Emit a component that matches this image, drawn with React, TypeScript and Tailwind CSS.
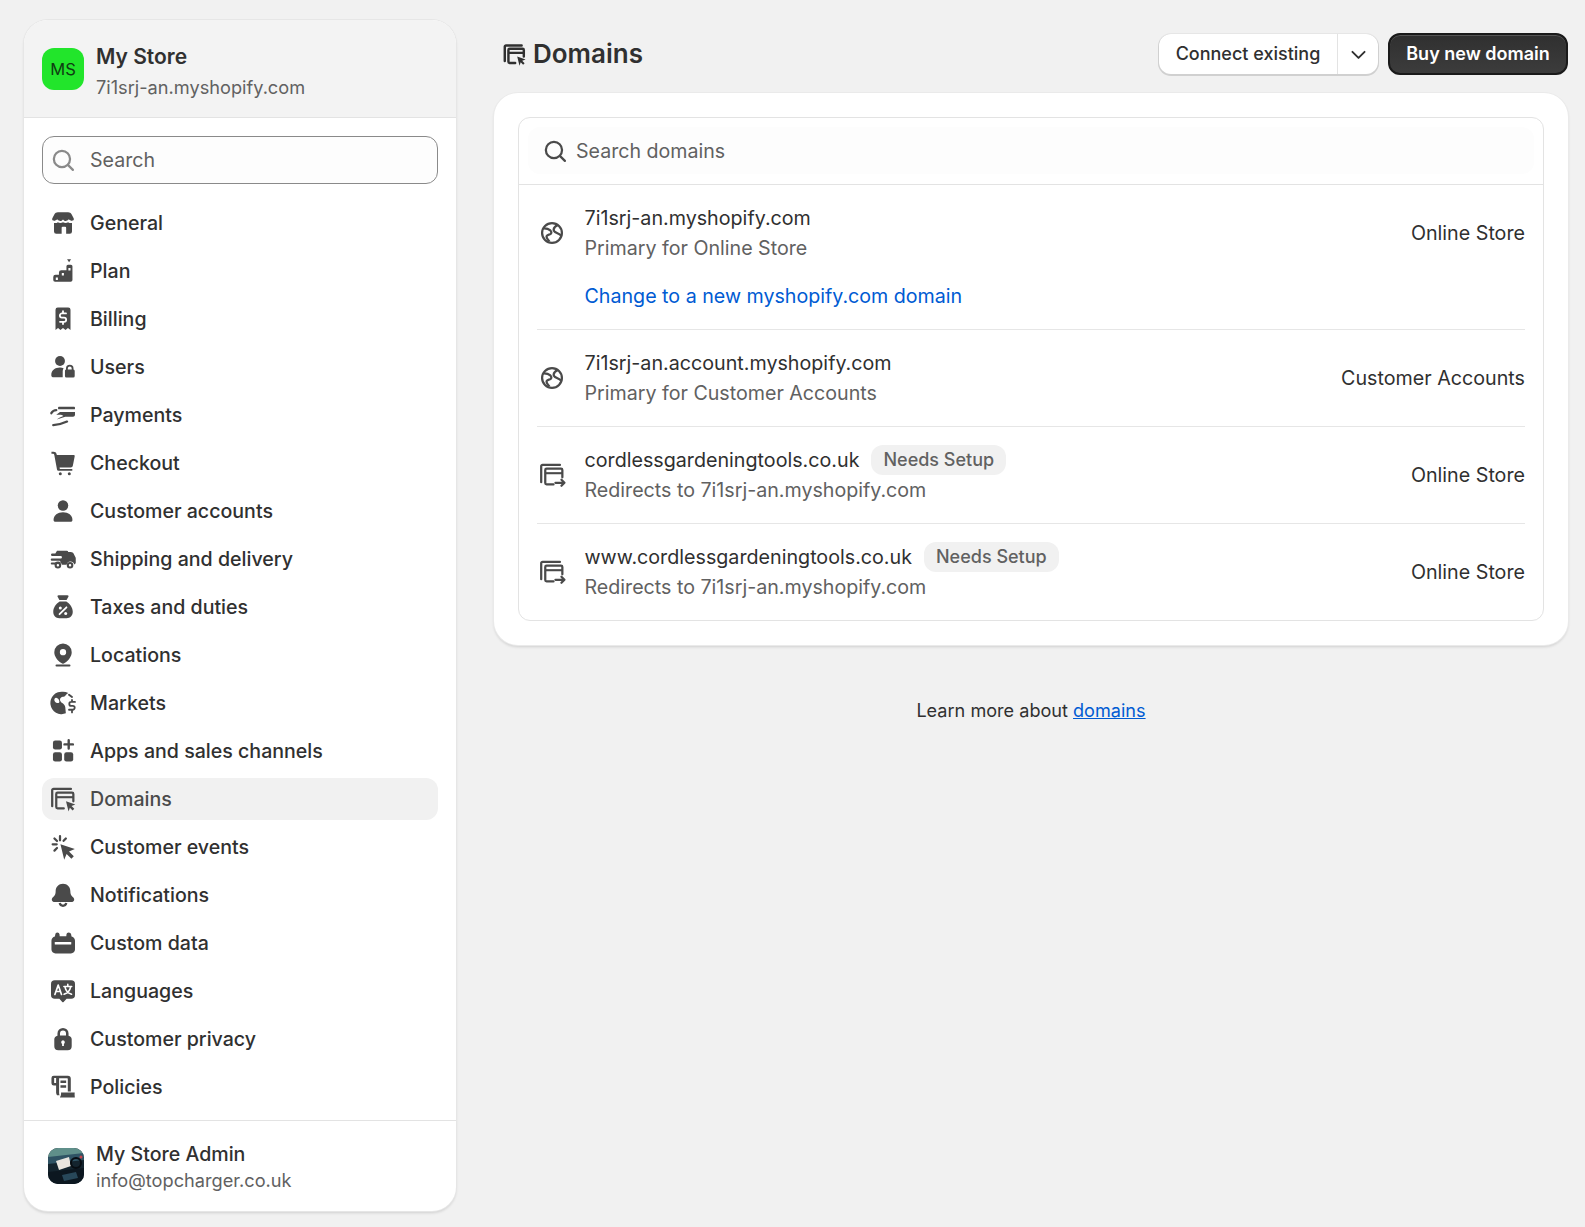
import React from "react";

const C = "#4a4a4a";
const Ic = ({ children }: { children: React.ReactNode }) => (
  <svg viewBox="0 0 20 20" fill={C} className="w-[30px] h-[30px] shrink-0">
    {children}
  </svg>
);

const store = (
  <Ic>
    <path d="M6.6 2.900h6.800c1 0 1.900.5 2.400 1.400l1.300 2.600c.3.700.1 1.300-.5 1.500-.9.300-1.900-.1-2.700-.9-.7.700-1.500 1.100-2.200 1.100s-1.300-.4-1.700-1c-.4.600-1 1-1.700 1s-1.500-.4-2.200-1.100c-.8.800-1.800 1.200-2.700.9-.6-.2-.8-.8-.5-1.500L4.200 4.300c.5-.9 1.400-1.400 2.400-1.400z" />
    <path fillRule="evenodd" d="M4 10c1 .2 1.900 0 2.600-.5.9.7 2.300.7 3.400 0 1.100.7 2.500.7 3.400 0 .7.500 1.600.7 2.600.500v5.700a1.500 1.500 0 0 1-1.500 1.500h-9A1.500 1.500 0 0 1 4 15.700zm5.800 2.500a.7.7 0 0 0-.7.7v4h3v-4a.7.7 0 0 0-.7-.7z" />
  </Ic>
);
const plan = (
  <Ic>
    <path fillRule="evenodd" d="M12.300 6.800a1 1 0 0 1 1-1h2a1 1 0 0 1 1 1V16a1.200 1.200 0 0 1-1.200 1.200H4.700A1.200 1.200 0 0 1 3.500 16v-2a1.500 1.500 0 0 1 1.500-1.500h2.300V11A1.500 1.500 0 0 1 8.800 9.500h3.500zM13.600 8v1.700h1.400V8zM9.200 11.300v1.700h1.400v-1.700zM5.200 14.300V16h1.400v-1.700z" />
    <path d="M12.700 2.200h2.700l-1.350 1.900z" />
  </Ic>
);
const billing = (
  <Ic>
    <path d="M6.500 2.300h7a1.500 1.500 0 0 1 1.500 1.500v13.500l-1.700-1.300-1.600 1.400-1.700-1.400-1.700 1.400-1.600-1.400L5 17.300V3.800a1.500 1.500 0 0 1 1.500-1.500z" />
    <path d="M12 6.300H9.300a1.400 1.400 0 0 0 0 2.800h1.400a1.400 1.400 0 0 1 0 2.800H8M10 4.800v1.500M10 11.900v1.500" fill="none" stroke="#fff" strokeWidth="1.200" strokeLinecap="round" />
  </Ic>
);
const users = (
  <Ic>
    <circle cx="8" cy="6" r="3.300" />
    <path d="M2.200 15.400c0-3.200 2.600-5 5.800-5 .9 0 1.700.1 2.400.4a3.600 3.600 0 0 0-.6 2v4H3.200c-.6 0-1-.5-1-1.400z" />
    <path fillRule="evenodd" d="M11.300 12.700a1 1 0 0 1 .7-1V11a2.500 2.500 0 0 1 5 0v.7a1 1 0 0 1 .8 1V16a1 1 0 0 1-1 1h-4.500a1 1 0 0 1-1-1zm1.900-1h2.600V11a1.300 1.300 0 0 0-2.600 0z" />
  </Ic>
);
const payments = (
  <Ic>
    <rect x="6.700" y="4.500" width="11.300" height="1.700" rx=".6" />
    <path d="M8 8h10v1.800c0 .8-.6 1.300-1.300 1.300h-5.200L5.800 13c1.300-1.100 2.800-1.900 4.500-2.400-.6-.4-1.400-.7-2.800-.7H5.500z" />
    <path d="M2.200 8.800C3 7.500 4 6.800 5.500 6.800" fill="none" stroke={C} strokeWidth="1.500" strokeLinecap="round" />
    <path d="M3.500 16.800c3.200-.2 6.200-1 9.200-2.400" fill="none" stroke={C} strokeWidth="1.500" strokeLinecap="round" />
  </Ic>
);
const cart = (
  <Ic>
    <path d="M2.300 2.500h1.400c1 0 1.800.6 2 1.500l.2.700h11.300c.4 0 .7.400.6.800l-1.200 6.200a1.500 1.500 0 0 1-1.500 1.300H7.700l.2 1h8.300v1.100H7a1 1 0 0 1-1-.8L4.200 4.600a.8.8 0 0 0-.8-.7H2.300z" />
    <circle cx="8.200" cy="17.200" r="1" />
    <circle cx="14.200" cy="17.200" r="1" />
  </Ic>
);
const customer = (
  <Ic>
    <circle cx="10" cy="6.300" r="3.500" />
    <path d="M3.700 16c0-3.300 2.800-5.200 6.300-5.200s6.300 1.900 6.300 5.200c0 .7-.5 1.200-1.200 1.200H4.900c-.7 0-1.200-.5-1.200-1.200z" />
  </Ic>
);
const truck = (
  <Ic>
    <path fillRule="evenodd" d="M6 4.500h6.500a1 1 0 0 1 1 .9h1.700c.9 0 1.600.5 2 1.200l1.100 2.200c.2.300.2.500.2.800v2.900a1.200 1.200 0 0 1-1 1.100 2.600 2.600 0 0 0-5.100.2H9.200a2.600 2.600 0 0 0-5.100-.2h.4v-.8H7.500a.8.800 0 0 0 0-1.600H2.600a.8.800 0 0 1 0-1.600h5.900a.8.800 0 0 0 0-1.600H2.800a.8.800 0 0 1 0-1.600h2.100z" />
    <path d="M2.500 12.400H5v1.300H2.500a.65.650 0 0 1 0-1.300z" />
    <path fillRule="evenodd" d="M6.600 12a2.200 2.200 0 1 1 0 4.400 2.200 2.200 0 0 1 0-4.400zm0 1.400a.8.800 0 1 0 0 1.600.8.800 0 0 0 0-1.600zM14.700 12a2.200 2.200 0 1 1 0 4.400 2.200 2.200 0 0 1 0-4.400zm0 1.400a.8.800 0 1 0 0 1.600.8.800 0 0 0 0-1.600z" />
  </Ic>
);
const taxes = (
  <Ic>
    <path d="M7 2.200h6a.7.700 0 0 1 .6 1l-1.200 2.200H7.600L6.400 3.200a.7.700 0 0 1 .6-1z" />
    <path d="M7.800 6.300h4.400c2.600 1.600 4.300 4.200 4.300 6.900 0 2.700-1.800 4.300-4 4.300H7.500c-2.200 0-4-1.600-4-4.300 0-2.700 1.700-5.300 4.300-6.900z" />
    <path d="M12.300 10.200l-4.600 4.600" stroke="#fff" strokeWidth="1.200" strokeLinecap="round" />
    <circle cx="8.200" cy="10.600" r="1" fill="#fff" />
    <circle cx="11.800" cy="14.400" r="1" fill="#fff" />
  </Ic>
);
const pin = (
  <Ic>
    <path fillRule="evenodd" d="M10 2.300a5.800 5.800 0 0 1 5.800 5.800c0 2.600-1.800 5.200-4.700 7.300a1.900 1.900 0 0 1-2.200 0C6 13.300 4.200 10.700 4.200 8.100A5.800 5.800 0 0 1 10 2.300zm0 3.700a2.100 2.100 0 1 0 0 4.200 2.100 2.100 0 0 0 0-4.200z" />
    <rect x="5" y="16.300" width="10" height="1.300" rx=".65" />
  </Ic>
);
const markets = (
  <Ic>
    <path d="M10 2.500a7.500 7.500 0 0 1 3.500.9c-.8.400-1.500 1-2 1.800-.3.600-.9.600-1.500.6-1.100 0-2 .9-2 2 0 .9.700 1.700 1.500 2.200 1 .6 1.800 1.500 2 2.600l.4 4.300A7.500 7.500 0 1 1 10 2.500z" />
    <path d="M5.500 6.500c1 .2 1.700 1 2 2 .3 1-.2 1.700-1.300 1.500-1-.2-2-.9-2-2 0-.9.500-1.600 1.300-1.500z" fill="#fff" />
    <path d="M18 9.300h-2.500a1.300 1.300 0 0 0 0 2.600h1a1.300 1.300 0 0 1 0 2.600H14M16 8v1.300M16 14.500v1.800" fill="none" stroke={C} strokeWidth="1.200" strokeLinecap="round" />
    <path d="M14 4.500l2 1.500" stroke={C} strokeWidth="1.300" strokeLinecap="round" />
  </Ic>
);
const apps = (
  <Ic>
    <rect x="3.300" y="3" width="6" height="6" rx="1.500" />
    <rect x="3.300" y="10.800" width="6" height="6.200" rx="1.500" />
    <rect x="10.800" y="10.800" width="6" height="6.200" rx="1.500" />
    <path d="M13.800 2.800v5.600M11 5.600h5.600" stroke={C} strokeWidth="1.600" strokeLinecap="round" />
  </Ic>
);
const DomainsInner = ({ color, w }: { color: string; w: number }) => (
  <>
    <path d="M2.800 14.800V4.200a.9.900 0 0 1 .9-.9h11.600" fill="none" stroke={color} strokeWidth={w} strokeLinecap="round" />
    <path d="M10.500 16.300H6.400a.9.900 0 0 1-.9-.9V6.700a.9.900 0 0 1 .9-.9h9.600a.9.900 0 0 1 .9.900v4.800" fill="none" stroke={color} strokeWidth={w} strokeLinecap="round" />
    <path d="M5.700 8.800h11" stroke={color} strokeWidth={w - 0.1} />
    <path d="M12 11.500l6.200 2.200-2.500 1 1.800 1.800-1.100 1.100-1.800-1.800-.9 2.500z" fill={color} />
  </>
);
const domains = (
  <Ic>
    <DomainsInner color={C} w={1.5} />
  </Ic>
);
const redirect = (
  <Ic>
    <path d="M2.800 14.800V4.200a.9.900 0 0 1 .9-.9h11.600" fill="none" stroke={C} strokeWidth="1.500" strokeLinecap="round" />
    <path d="M11 16.300H6.400a.9.900 0 0 1-.9-.9V6.700a.9.900 0 0 1 .9-.9h9.600a.9.900 0 0 1 .9.900v4.800" fill="none" stroke={C} strokeWidth="1.500" strokeLinecap="round" />
    <path d="M5.700 8.800h11" stroke={C} strokeWidth="1.400" />
    <path d="M12.300 15.200h5.800M16.300 13.200l2 2-2 2" fill="none" stroke={C} strokeWidth="1.500" strokeLinecap="round" strokeLinejoin="round" />
  </Ic>
);
const events = (
  <Ic>
    <path d="M8.300 8.100l9.600 3.300-3.900 1.600 3.200 3.200-1.600 1.600-3.200-3.200-1.600 3.900z" />
    <path d="M8 2.800v2.700M3.100 8.200h2.700M4.300 4.300l1.700 1.700M11.900 4.300l-1.500 1.600M4.300 12.400l1.700-1.700" stroke={C} strokeWidth="1.500" strokeLinecap="round" />
  </Ic>
);
const bell = (
  <Ic>
    <path d="M10 2.500c2.900 0 4.900 2.200 4.900 5 0 1.600.4 2.800 1.600 3.900.9.800 1.100 1.500.9 2.100-.2.700-.9 1.200-1.800 1.200H4.400c-.9 0-1.600-.5-1.800-1.200-.2-.6 0-1.300.9-2.100C4.700 10.300 5.100 9.100 5.100 7.500c0-2.800 2-5 4.900-5z" />
    <path d="M7.800 15.400a2.250 2.250 0 0 0 4.400 0" fill="none" stroke={C} strokeWidth="1.500" />
  </Ic>
);
const custom = (
  <Ic>
    <path d="M6.200 3c.8 0 1.400.6 1.500 1.300l.1 1.200h4.400l.1-1.200c.1-.7.700-1.300 1.500-1.300s1.400.5 1.600 1.200l.3 1.500c1.300.3 2.300 1.400 2.300 2.800v5.900c0 1.500-1.200 2.600-2.700 2.600H5c-1.500 0-2.700-1.100-2.700-2.600V8.500c0-1.400 1-2.500 2.300-2.800l.3-1.500C5.100 3.500 5.400 3 6.200 3z" />
    <rect x="4.500" y="9.300" width="11" height="1.700" rx=".4" fill="#fff" />
  </Ic>
);
const lang = (
  <Ic>
    <path d="M4.500 2.800h11a2.500 2.500 0 0 1 2.500 2.500v7.400a2.500 2.500 0 0 1-2.500 2.500h-3.100l-2 2.100a.6.600 0 0 1-.9 0l-1.900-2.100H4.500A2.500 2.500 0 0 1 2 12.700V5.300a2.500 2.500 0 0 1 2.500-2.500z" />
    <path d="M4.600 12.300l2.200-6.200 2.200 6.200M5.400 10.300h2.800" fill="none" stroke="#fff" strokeWidth="1.100" strokeLinecap="round" strokeLinejoin="round" />
    <path d="M10.600 7h5.200M13.200 5.600V7M11.300 7.200c.4 2.200 1.900 4 4.400 5M15.100 7.200c-.4 2.200-1.900 4-4.400 5" fill="none" stroke="#fff" strokeWidth="1.050" strokeLinecap="round" />
  </Ic>
);
const lock = (
  <Ic>
    <path fillRule="evenodd" d="M6.300 7.800V6.300a3.700 3.700 0 0 1 7.400 0v1.500c1.200.2 2.100 1.200 2.100 2.400v4.600a2.700 2.700 0 0 1-2.700 2.700H6.900a2.700 2.700 0 0 1-2.700-2.700v-4.600c0-1.200.900-2.200 2.100-2.400zM8 7.700h4V6.300a2 2 0 0 0-4 0zm2 3.200a1.300 1.300 0 0 0-.6 2.400v1.300h1.200v-1.300a1.300 1.300 0 0 0-.6-2.400z" />
  </Ic>
);
const policies = (
  <Ic>
    <path fillRule="evenodd" d="M2.300 4a1.500 1.500 0 0 1 1.500-1.500h9.400a2 2 0 0 1 2 2V13h-2V4.500a.4.4 0 0 0-.4-.4H7.400v9.700c0 .8.200 1.500.4 1.700H6c-.3-.5-.6-1.100-.6-1.700V9H3.800a1.500 1.500 0 0 1-1.500-1.500zm1.800 0v3.300h1.300V4z" />
    <path d="M8.300 5.700h3.800v1.700H8.300zM8.300 8.800h3.800v1.700H8.300z" />
    <path d="M8.700 13.700h9.100c-.1 1-.1 2.100.1 3.300H7.900c.7-.9.900-2.100.8-3.300z" />
  </Ic>
);
const globe = (
  <Ic>
    <circle cx="10" cy="10" r="6.600" fill="none" stroke={C} strokeWidth="1.500" />
    <path d="M4.200 7c1.800-.1 3.500.3 4.700 1.300 1 1 .9 2-.2 2.500-1 .4-1.900.3-2.300 1.300-.3.900.6 2.100 1.900 3.500" fill="none" stroke={C} strokeWidth="1.500" />
    <path d="M13.800 4.700c-1.300.6-2.600 1.600-2.700 3-.1 1.100.9 1.700 1.900 2.200 1.200.6 2.400 1.200 3.400 2.100" fill="none" stroke={C} strokeWidth="1.500" />
  </Ic>
);

const Search = ({ color }: { color: string }) => (
  <svg viewBox="0 0 20 20" className="w-[30px] h-[30px] shrink-0" fill="none" stroke={color} strokeWidth="1.500" strokeLinecap="round">
    <circle cx="9.300" cy="9.300" r="5.400" />
    <path d="M13.400 13.400l3.200 3.200" />
  </svg>
);

const nav: [string, React.ReactNode][] = [
  ["General", store],
  ["Plan", plan],
  ["Billing", billing],
  ["Users", users],
  ["Payments", payments],
  ["Checkout", cart],
  ["Customer accounts", customer],
  ["Shipping and delivery", truck],
  ["Taxes and duties", taxes],
  ["Locations", pin],
  ["Markets", markets],
  ["Apps and sales channels", apps],
  ["Domains", domains],
  ["Customer events", events],
  ["Notifications", bell],
  ["Custom data", custom],
  ["Languages", lang],
  ["Customer privacy", lock],
  ["Policies", policies],
];

const Pill = () => (
  <span className="h-[30px] px-[12px] rounded-[12px] bg-[#f1f1f1] text-[#616161] text-[18px] leading-[30px] font-[450]">Needs Setup</span>
);

const Row = ({
  icon,
  name,
  sub,
  right,
  badge,
  link,
}: {
  icon: React.ReactNode;
  name: string;
  sub: string;
  right: string;
  badge?: boolean;
  link?: string;
}) => (
  <div className="border-b border-[#e6e6e6] last:border-b-0 pt-[18px] pb-[18px]">
    <div className="flex items-center">
      <div className="mr-[17.5px]">{icon}</div>
      <div className="flex-1 min-w-0">
        <div className="flex items-center gap-[12px] h-[30px]">
          <span className="text-[#303030] text-[19.7px] leading-[30px]">{name}</span>
          {badge && <Pill />}
        </div>
        <div className="text-[#616161] text-[19.65px] leading-[30px]">{sub}</div>
      </div>
      <div className="text-[#303030] text-[19.7px] leading-[30px]">{right}</div>
    </div>
    {link && (
      <div className="pl-[47.5px] mt-[19px] -mb-[1px] -translate-y-[1px] text-[#005bd3] text-[19.65px] leading-[30px]">{link}</div>
    )}
  </div>
);

export default function App() {
  return (
    <div className="min-h-screen bg-[#f1f1f1] flex items-start pl-[24px] pt-[20px] pr-[17px] font-['Inter',sans-serif] overflow-hidden">
      <aside className="w-[432px] h-[1191px] shrink-0 flex flex-col bg-white rounded-[24px] overflow-hidden shadow-[0_0_0_1px_#e6e6e6,0_2px_3px_rgba(0,0,0,0.14)]">
        <div className="h-[98px] shrink-0 bg-[#f3f3f3] border-b border-[#e3e3e3] flex items-start gap-[12px] pl-[18px] pt-[22px]">
          <div className="mt-[6px] w-[42px] h-[42px] rounded-[12px] bg-[#22e52b] flex items-center justify-center text-[#0f3d12] text-[16.5px] font-normal">MS</div>
          <div>
            <div className="text-[#303030] text-[21px] leading-[30px] font-semibold">My Store</div>
            <div className="text-[#616161] text-[18.2px] leading-[30px]">7i1srj-an.myshopify.com</div>
          </div>
        </div>
        <div className="flex-1 flex flex-col px-[18px] pt-[18px]">
          <div className="h-[48px] shrink-0 rounded-[12px] border border-[#8a8a8a] bg-[#fdfdfd] flex items-center pl-[5px] gap-[12px]">
            <Search color="#8a8a8a" />
            <span className="text-[#616161] text-[19.6px] pt-[2px]">Search</span>
          </div>
          <nav className="mt-[18px] flex flex-col gap-[6px]">
            {nav.map(([label, icon]) => (
              <div
                key={label}
                className={
                  label === "Domains"
                    ? "h-[42px] flex items-center rounded-[12px] bg-[#f1f1f1] pl-[6px] gap-[12px] text-[#4a4a4a] text-[19.6px] font-medium"
                    : "h-[42px] flex items-center rounded-[12px] pl-[6px] gap-[12px] text-[#303030] text-[19.6px] font-medium"
                }
              >
                {icon}
                <span className="pt-[2px]">{label}</span>
              </div>
            ))}
          </nav>
        </div>
        <div className="h-[91px] shrink-0 border-t border-[#e3e3e3] flex items-start pl-[24px] pt-[20px] gap-[12px]">
          <svg viewBox="0 0 36 36" className="mt-[7px] w-[36px] h-[36px] rounded-[10px] shrink-0">
            <rect width="36" height="36" fill="#14242e" />
            <rect width="36" height="9" fill="#5f8f8a" />
            <path d="M0 9 36 5v7L0 16z" fill="#2f5364" />
            <path d="M8 13 21 9l2 9-12 4z" fill="#e9e5df" />
            <circle cx="28" cy="15" r="5" fill="none" stroke="#070d12" strokeWidth="2" />
            <path d="M0 24 36 20v16H0z" fill="#0c1720" />
            <path d="M14 27l14-3 2 6-14 3z" fill="#28485a" />
            <circle cx="33" cy="9" r="1.5" fill="#c8434a" />
          </svg>
          <div>
            <div className="text-[#303030] text-[19.6px] leading-[26px] font-[550]">My Store Admin</div>
            <div className="text-[#616161] text-[18.2px] leading-[27px]">info@topcharger.co.uk</div>
          </div>
        </div>
      </aside>

      <main className="ml-[38px] flex-1 min-w-0 pt-[13px]">
        <header className="h-[42px] flex items-center justify-between">
          <div className="flex items-center gap-[5px] pl-[7px]">
            <svg viewBox="0 0 20 20" className="w-[27px] h-[27px] shrink-0">
              <DomainsInner color="#303030" w={1.8} />
            </svg>
            <h1 className="text-[#303030] text-[26px] leading-[36px] font-semibold">Domains</h1>
          </div>
          <div className="flex items-center gap-[10px]">
            <div className="flex h-[40px] rounded-[12px] bg-white shadow-[0_1px_0_1px_#d0d0d0,0_0_0_1px_#e6e6e6]">
              <div className="w-[179px] pb-[2px] flex items-center justify-center text-[#303030] text-[18px] font-medium border-r border-[#e3e3e3]">Connect existing</div>
              <div className="w-[40px] flex items-center justify-center">
                <svg viewBox="0 0 20 20" className="w-[27px] h-[27px]" fill="none" stroke="#303030" strokeWidth="1.400" strokeLinecap="round" strokeLinejoin="round">
                  <path d="M5.500 8l4.500 4.500L14.500 8" />
                </svg>
              </div>
            </div>
            <div className="w-[180px] h-[42px] pb-[2px] rounded-[12px] border-2 border-[#1a1a1a] bg-gradient-to-b from-[#303030] to-[#3c3c3c] shadow-[inset_0_1px_0_#555] flex items-center justify-center text-white text-[18px] font-semibold">
              Buy new domain
            </div>
          </div>
        </header>

        <section className="mt-[18px] h-[552px] rounded-[24px] bg-white shadow-[0_0_0_1px_#eaeaea,0_2px_3px_rgba(0,0,0,0.14)] p-[24px]">
          <div className="rounded-[12px] border border-[#e3e3e3] h-[504px]">
            <div className="h-[67px] border-b border-[#e3e3e3] px-[9px] pt-[9px]">
              <div className="h-[47px] rounded-[12px] bg-[#fdfdfd] flex items-center pl-[12px] gap-[6px]">
                <Search color="#4a4a4a" />
                <span className="text-[#616161] text-[19.6px] pt-[3px]">Search domains</span>
              </div>
            </div>
            <div className="px-[18px]">
              <Row icon={globe} name="7i1srj-an.myshopify.com" sub="Primary for Online Store" right="Online Store" link="Change to a new myshopify.com domain" />
              <Row icon={globe} name="7i1srj-an.account.myshopify.com" sub="Primary for Customer Accounts" right="Customer Accounts" />
              <Row icon={redirect} name="cordlessgardeningtools.co.uk" sub="Redirects to 7i1srj-an.myshopify.com" right="Online Store" badge />
              <Row icon={redirect} name="www.cordlessgardeningtools.co.uk" sub="Redirects to 7i1srj-an.myshopify.com" right="Online Store" badge />
            </div>
          </div>
        </section>

        <p className="mt-[50px] text-center text-[#303030] text-[18.1px] leading-[30px]">
          Learn more about <span className="text-[#005bd3] underline">domains</span>
        </p>
      </main>
    </div>
  );
}
